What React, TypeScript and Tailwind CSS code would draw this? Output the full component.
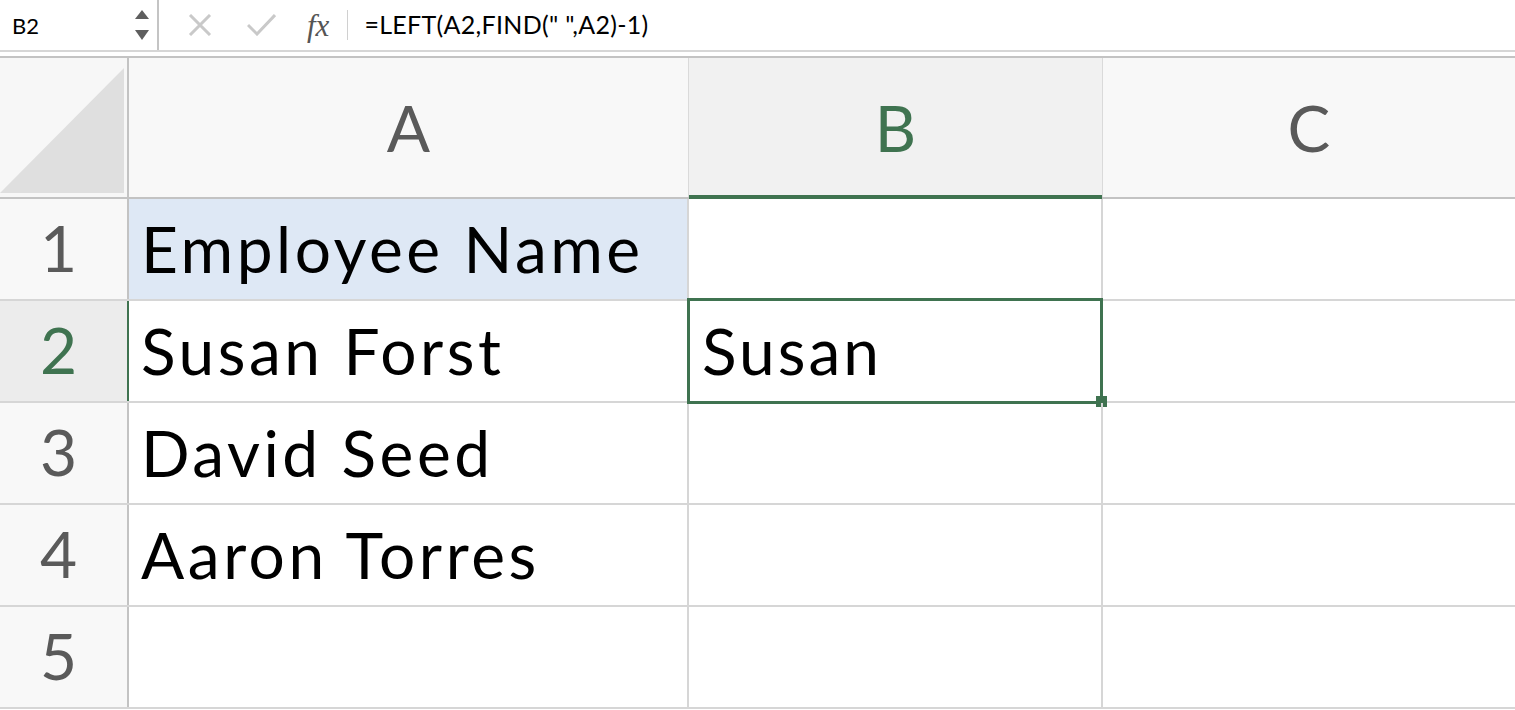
import React from 'react';

const FONT = "font-['Lato','Noto_Sans',sans-serif]";
const COLS = 'grid grid-cols-[129px_560px_414px_1fr]';

const rows = [
  { n: 1, a: 'Employee Name', b: '' },
  { n: 2, a: 'Susan Forst', b: 'Susan' },
  { n: 3, a: 'David Seed', b: '' },
  { n: 4, a: 'Aaron Torres', b: '' },
  { n: 5, a: '', b: '' },
];

const FormulaBar: React.FC = () => (
  <div className="flex h-[52px] items-center border-b-2 border-[#d6d6d6] bg-white">
    {/* Name box */}
    <div className="flex h-full w-[159px] items-center justify-between border-r-2 border-[#c4c4c4] pl-3 pr-[8px]">
      <span className="text-[22px] text-black">B2</span>
      <div className="flex flex-col items-center gap-[11px]">
        <svg width="14" height="9" viewBox="0 0 14 9"><path d="M7 0L14 9H0Z" fill="#5e5e5e" /></svg>
        <svg width="14" height="10" viewBox="0 0 14 10"><path d="M0 0H14L7 10Z" fill="#5e5e5e" /></svg>
      </div>
    </div>
    {/* Cancel / Enter / fx */}
    <div className="flex h-full items-center pl-[29px]">
      <svg width="24" height="22" viewBox="0 0 24 22">
        <path d="M2 1L22 21M22 1L2 21" stroke="#c9c9c9" strokeWidth="3" />
      </svg>
      <svg className="ml-[35px]" width="29" height="22" viewBox="0 0 29 22">
        <path d="M1 11L10 20L28 1" stroke="#c9c9c9" strokeWidth="3" fill="none" />
      </svg>
      <span className="ml-[31px] font-['Liberation_Serif',serif] text-[31px] italic leading-none text-[#555]">fx</span>
      <div className="ml-[18px] h-[30px] w-px bg-[#d0d0d0]" />
      <span className="ml-[16px] text-[25px] tracking-[0.3px] text-black">=LEFT(A2,FIND(" ",A2)-1)</span>
    </div>
  </div>
);

const HeaderRow: React.FC = () => (
  <div className={`${COLS} h-[143px] border-t-2 border-b-2 border-[#c3c3c3]`}>
    <div className="flex border-r-2 border-[#c3c3c3] bg-[#f7f7f7] pr-[3px] pb-[4px] pt-[10px]">
      <svg className="h-full w-full" viewBox="0 0 100 100" preserveAspectRatio="none">
        <path d="M0 100L100 0V100Z" fill="#dfdfdf" />
      </svg>
    </div>
    <div className="flex items-center justify-center border-r border-[#dadada] bg-[#f8f8f8] text-[64px] text-[#5a5a5a]">A</div>
    <div className="relative flex items-center justify-center border-r border-[#dadada] bg-[#f1f1f1] text-[64px] text-[#3f7350]">
      B
      <div className="absolute -bottom-[2px] left-0 right-0 h-[4px] bg-[#3f7350]" />
    </div>
    <div className="flex items-center justify-center bg-[#f8f8f8] text-[64px] text-[#5a5a5a]">C</div>
  </div>
);

const SheetRow: React.FC<{ n: number; a: string; b: string }> = ({ n, a, b }) => {
  const active = n === 2;
  return (
    <div className={`${COLS} h-[102px] border-b-2 border-[#d6d6d6]`}>
      <div
        className={`flex items-center justify-center border-r-2 pr-[10px] pb-[2px] text-[64px] ${
          active ? 'border-[#3f7350] bg-[#ececec] text-[#3f7350]' : 'border-[#c3c3c3] bg-[#f8f8f8] text-[#5a5a5a]'
        }`}
      >
        {n}
      </div>
      <div
        className={`flex items-center border-r-2 border-[#d6d6d6] pl-[12px] text-[64px] tracking-[3.5px] text-black ${
          n === 1 ? 'bg-[#dee8f5]' : 'bg-white'
        }`}
      >
        {a}
      </div>
      <div className="relative flex items-center border-r-2 border-[#d6d6d6] pl-[13px] text-[64px] tracking-[3px] text-black">
        {b}
        {active && (
          <>
            <div className="absolute -left-[2px] -right-[2px] -top-[3px] -bottom-[3px] border-[3px] border-[#3f7350]" />
            <div className="absolute -right-[6px] -bottom-[6px] h-[11px] w-[11px] bg-[#3f7350]" />
          </>
        )}
      </div>
      <div className="bg-white" />
    </div>
  );
};

export default function App() {
  return (
    <div className={`h-[710px] w-[1515px] overflow-hidden bg-white ${FONT}`}>
      <FormulaBar />
      <div className="h-[4px] bg-white" />
      <HeaderRow />
      {rows.map((r) => (
        <SheetRow key={r.n} {...r} />
      ))}
    </div>
  );
}
